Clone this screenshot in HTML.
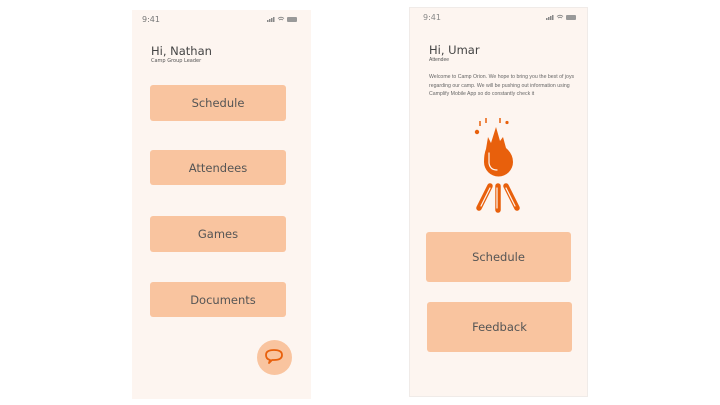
<!DOCTYPE html>
<html><head><meta charset="utf-8"><style>
body{margin:0;width:720px;height:405px;background:#fff;position:relative;overflow:hidden;font-family:"DejaVu Sans","Liberation Sans",sans-serif;color:#555}
.ph{position:absolute;background:#fdf5f0}
.t{position:absolute;font-size:8px;color:#777}
.b{position:absolute;background:#f9c49f;border-radius:3px;display:flex;align-items:center;justify-content:center;font-size:11.5px;color:#555}
</style></head><body>
<div class="ph" style="left:132px;top:10px;width:179px;height:389px"></div>
<div class="ph" style="left:409px;top:7px;width:179px;height:390px;border:1px solid #f0ebe8;box-sizing:border-box"></div>

<div class="t" style="left:142px;top:15px;">9:41</div>
<svg style="position:absolute;left:267px;top:16px" width="32" height="7"><rect x="0" y="4" width="1.5" height="2" fill="#888"/><rect x="2" y="3" width="1.5" height="3" fill="#888"/><rect x="4" y="2" width="1.5" height="4" fill="#888"/><rect x="6" y="1" width="1.5" height="5" fill="#888"/><path d="M11 2.5 Q14 0 17 2.5 M12 4 Q14 2.5 16 4" stroke="#888" fill="none" stroke-width="1"/><rect x="20" y="1" width="10" height="5" rx="1" fill="#999"/></svg>
<div style="position:absolute;left:151px;top:44px;font-size:11.5px;color:#444">Hi, Nathan</div>
<div style="position:absolute;left:151px;top:58px;font-size:5px;color:#555">Camp Group Leader</div>
<div class="b" style="left:150px;top:85px;width:136px;height:36px">Schedule</div>
<div class="b" style="left:150px;top:150px;width:136px;height:35px">Attendees</div>
<div class="b" style="left:150px;top:216px;width:136px;height:36px">Games</div>
<div class="b" style="left:150px;top:282px;width:136px;height:35px;padding-left:10px;box-sizing:border-box">Documents</div>
<div style="position:absolute;left:257px;top:340px;width:35px;height:35px;border-radius:50%;background:#f9c49f"></div>
<svg style="position:absolute;left:264px;top:347px" width="22" height="20"><path d="M6 13 Q2 12 2 8 Q2 3 10 3 Q18 3 18 8 Q18 13 10 13 L8 13 L5 16 Z" fill="none" stroke="#e8600c" stroke-width="1.8" stroke-linejoin="round"/></svg>

<div class="t" style="left:423px;top:13px;color:#888">9:41</div>
<svg style="position:absolute;left:546px;top:14px" width="32" height="7"><rect x="0" y="4" width="1.5" height="2" fill="#888"/><rect x="2" y="3" width="1.5" height="3" fill="#888"/><rect x="4" y="2" width="1.5" height="4" fill="#888"/><rect x="6" y="1" width="1.5" height="5" fill="#888"/><path d="M11 2.5 Q14 0 17 2.5 M12 4 Q14 2.5 16 4" stroke="#888" fill="none" stroke-width="1"/><rect x="20" y="1" width="10" height="5" rx="1" fill="#999"/></svg>
<div style="position:absolute;left:429px;top:43px;font-size:11.5px;color:#444">Hi, Umar</div>
<div style="position:absolute;left:429px;top:57px;font-size:5px;color:#555;font-family:'Liberation Sans',sans-serif">Attendee</div>
<div style="position:absolute;left:429px;top:73px;width:150px;font-size:5.2px;line-height:8.7px;color:#666;font-family:'Liberation Sans',sans-serif">Welcome to Camp Orion. We hope to bring you the best of joys regarding our camp. We will be pushing out information using Camplify Mobile App so do constantly check it</div>
<svg style="position:absolute;left:465px;top:110px" width="65" height="110">
<g fill="#e8600c" stroke="#e8600c">
<circle cx="12" cy="22" r="2.2" stroke="none"/>
<circle cx="42" cy="12.5" r="1.6" stroke="none"/>
<line x1="15" y1="11" x2="15" y2="16" stroke-width="1.5"/>
<line x1="21" y1="8" x2="21" y2="13" stroke-width="1.5"/>
<line x1="35" y1="8" x2="35" y2="13" stroke-width="1.5"/>
<path d="M21 39 L23 27 L26 33 L31 17 L35 31 L38 27 L41 38 Q48 44 48 52 A14.5 14.5 0 0 1 19 52 Q19 44 21 39 Z" stroke="none"/>
<line x1="25" y1="76" x2="14" y2="98" stroke-width="5.5" stroke-linecap="round"/>
<line x1="33" y1="76" x2="33" y2="100" stroke-width="5.5" stroke-linecap="round"/>
<line x1="41" y1="76" x2="52" y2="98" stroke-width="5.5" stroke-linecap="round"/>
</g>
<g fill="none" stroke="#fdf5f0" stroke-width="1.2" stroke-linecap="round">
<path d="M24 43 L24 53 Q25 60 32 60"/>
<line x1="25" y1="78" x2="16" y2="96"/>
<line x1="32" y1="78" x2="32" y2="98"/>
<line x1="41" y1="78" x2="50" y2="96"/>
</g>
</svg>
<div class="b" style="left:426px;top:232px;width:145px;height:50px">Schedule</div>
<div class="b" style="left:427px;top:302px;width:145px;height:50px">Feedback</div>
</body></html>
